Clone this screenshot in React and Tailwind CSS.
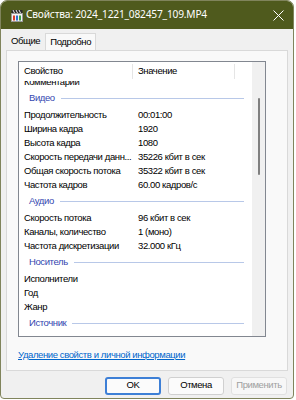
import React from "react";

const Row = ({ label, value }) => (
  <div className="flex h-[14px] items-center">
    <div className="w-[114px] shrink-0 overflow-hidden whitespace-nowrap pl-[5px]">{label}</div>
    <div className="pl-[5px] whitespace-nowrap">{value}</div>
  </div>
);

const Section = ({ title }) => (
  <div className="flex h-[19px] items-center pl-[10px] pr-[8px]">
    <span className="text-[#3346b0]">{title}</span>
    <div className="ml-[6px] h-px flex-1 bg-[#b8c8e8]" />
  </div>
);

const FileIcon = () => (
  <svg width="12" height="13" viewBox="0 0 12 13">
    <rect x="0.5" y="1" width="11" height="3" fill="#2a2a2a" />
    <path d="M2 1 L3.5 4 M5 1 L6.5 4 M8 1 L9.5 4" stroke="#e8e8e8" strokeWidth="1" />
    <rect x="0.5" y="4.5" width="11" height="8" fill="#f4f4f4" stroke="#9a9a9a" strokeWidth="1" />
    <rect x="2" y="6.5" width="2" height="5" fill="#d83a2a" />
    <rect x="5" y="6.5" width="2" height="5" fill="#2f6fd0" />
    <rect x="8" y="6.5" width="2" height="5" fill="#3aa04a" />
  </svg>
);

export default function App() {
  return (
    <div
      className="h-[400px] w-[296px] bg-white text-[9.5px] tracking-[-0.4px] text-black"
      style={{ fontFamily: "'Liberation Sans', Arial, sans-serif" }}
    >
      <div className="flex h-[399px] w-[294px] flex-col overflow-hidden rounded-t-[7px] rounded-b-[4px] border border-[#80845c] bg-[#f0f0f0]">
        {/* Title bar */}
        <div className="flex h-[28px] shrink-0 items-center bg-[#4f5a1d] pl-[10px] pr-[8px] text-white">
          <FileIcon />
          <span className="ml-[3px] text-[10.2px] tracking-[-0.2px]" style={{ fontFamily: "'Noto Sans', sans-serif" }}>
            Свойства: 2024_1221_082457_109.MP4
          </span>
          <div className="flex-1" />
          <svg width="11" height="11" viewBox="0 0 11 11" className="mr-[1px]">
            <path d="M0.5 0.5 L10.5 10.5 M10.5 0.5 L0.5 10.5" stroke="#ffffff" strokeWidth="1" />
          </svg>
        </div>
        {/* Tabs */}
        <div className="flex h-[21px] shrink-0 items-end pl-[5px]">
          <div className="flex h-[17px] items-center px-[5px]">Общие</div>
          <div className="-mb-px flex h-[18px] items-center border border-b-0 border-[#d9d9d9] bg-[#f9f9f9] px-[4px]">
            Подробно
          </div>
        </div>
        {/* Tab page */}
        <div className="mx-[5px] flex h-[321px] shrink-0 flex-col border border-[#d9d9d9] bg-[#f9f9f9] pl-[11px] pr-[21px] pt-[10px]">
          <div className="flex h-[276px] shrink-0 border border-[#828790] bg-white">
            <div className="flex min-w-0 flex-1 flex-col">
              <div className="relative z-10 flex h-[19px] shrink-0 items-center bg-white">
                <div className="w-[114px] shrink-0 border-r border-[#e5e5e5] pl-[5px]">Свойство</div>
                <div className="w-[102px] shrink-0 border-r border-[#e5e5e5] pl-[5px]">Значение</div>
              </div>
              <div className="min-h-0 flex-1 overflow-hidden">
                <div className="-mt-[6px]">
                  <Row label="Комментарии" value="" />
                  <Section title="Видео" />
                  <Row label="Продолжительность" value="00:01:00" />
                  <Row label="Ширина кадра" value="1920" />
                  <Row label="Высота кадра" value="1080" />
                  <Row label="Скорость передачи данн..." value="35226 кбит в сек" />
                  <Row label="Общая скорость потока" value="35322 кбит в сек" />
                  <Row label="Частота кадров" value="60.00 кадров/с" />
                  <Section title="Аудио" />
                  <Row label="Скорость потока" value="96 кбит в сек" />
                  <Row label="Каналы, количество" value="1 (моно)" />
                  <Row label="Частота дискретизации" value="32.000 кГц" />
                  <Section title="Носитель" />
                  <Row label="Исполнители" value="" />
                  <Row label="Год" value="" />
                  <Row label="Жанр" value="" />
                  <Section title="Источник" />
                  <Row label="Режиссер" value="" />
                </div>
              </div>
            </div>
            {/* Scrollbar */}
            <div className="flex w-[13px] shrink-0 justify-center bg-[#f0f0f0] pt-[36px]">
              <div className="h-[77px] w-[2px] rounded-full bg-[#7f7f7f]" />
            </div>
          </div>
          <div className="mt-[11px] text-[#0066cc] underline">Удаление свойств и личной информации</div>
        </div>
        {/* Buttons */}
        <div className="flex flex-1 items-center justify-end gap-[7px] pr-[6px] pt-[2px]">
          <div className="flex h-[18px] w-[56px] items-center justify-center rounded-[3px] border-2 border-[#3d7fd6] bg-[#fbfbfb]">
            OK
          </div>
          <div className="flex h-[18px] w-[56px] items-center justify-center rounded-[3px] border border-[#d0d0d0] bg-[#fbfbfb]">
            Отмена
          </div>
          <div className="flex h-[18px] w-[56px] items-center justify-center rounded-[3px] border border-[#e0e0e0] bg-[#f7f7f7] text-[#a0a0a0]">
            Применить
          </div>
        </div>
      </div>
    </div>
  );
}
